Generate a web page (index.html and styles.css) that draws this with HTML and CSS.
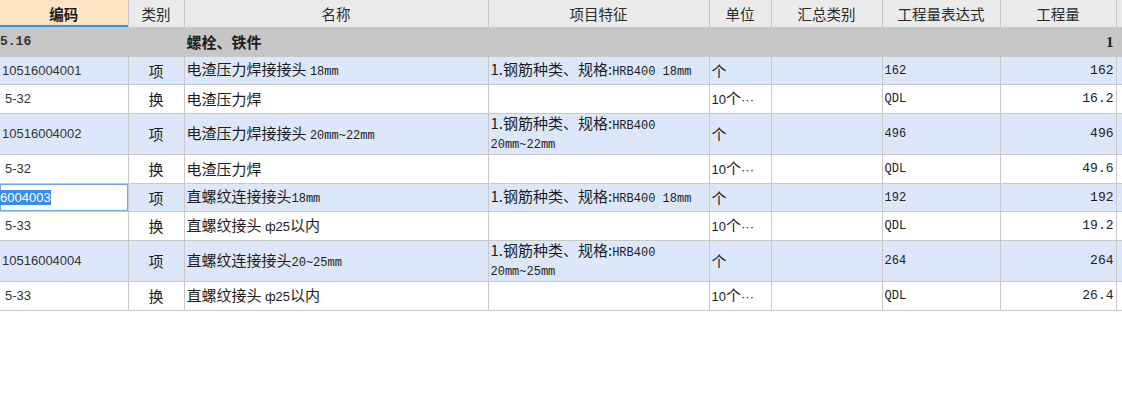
FILE: index.html
```html
<!DOCTYPE html>
<html lang="zh-CN">
<head>
<meta charset="utf-8">
<title>清单</title>
<link rel="stylesheet" href="styles.css">
</head>
<body>
<table class="grid">
  <colgroup>
    <col class="c-code"><col class="c-type"><col class="c-name"><col class="c-feat"><col class="c-unit"><col class="c-sum"><col class="c-expr"><col class="c-qty"><col class="c-fill">
  </colgroup>
  <thead>
    <tr class="hdr">
      <th class="h-active">编码</th>
      <th>类别</th>
      <th>名称</th>
      <th>项目特征</th>
      <th>单位</th>
      <th>汇总类别</th>
      <th>工程量表达式</th>
      <th>工程量</th>
      <th class="fill"></th>
    </tr>
  </thead>
  <tbody>
    <tr class="group">
      <td class="code gcode">5.16</td>
      <td></td>
      <td class="name bold">螺栓、铁件</td>
      <td></td><td></td><td></td><td></td>
      <td class="qty gqty">1</td>
      <td class="fill"></td>
    </tr>
    <tr class="item">
      <td class="code">10516004001</td>
      <td class="type">项</td>
      <td class="name">电渣压力焊接接头 <span class="lat">18mm</span></td>
      <td class="feat">1.钢筋种类、规格:<span class="lat">HRB400 18mm</span></td>
      <td class="unit">个</td>
      <td></td>
      <td class="expr">162</td>
      <td class="qty">162</td>
      <td class="fill"></td>
    </tr>
    <tr class="sub">
      <td class="code ind">5-32</td>
      <td class="type">换</td>
      <td class="name">电渣压力焊</td>
      <td></td>
      <td class="unit"><span class="sans">10</span>个<span class="sans">···</span></td>
      <td></td>
      <td class="expr">QDL</td>
      <td class="qty">16.2</td>
      <td class="fill"></td>
    </tr>
    <tr class="item tall">
      <td class="code">10516004002</td>
      <td class="type">项</td>
      <td class="name">电渣压力焊接接头 <span class="lat">20mm~22mm</span></td>
      <td class="feat">1.钢筋种类、规格:<span class="lat">HRB400</span><br><span class="lat">20mm~22mm</span></td>
      <td class="unit">个</td>
      <td></td>
      <td class="expr">496</td>
      <td class="qty">496</td>
      <td class="fill"></td>
    </tr>
    <tr class="sub">
      <td class="code ind">5-32</td>
      <td class="type">换</td>
      <td class="name">电渣压力焊</td>
      <td></td>
      <td class="unit"><span class="sans">10</span>个<span class="sans">···</span></td>
      <td></td>
      <td class="expr">QDL</td>
      <td class="qty">49.6</td>
      <td class="fill"></td>
    </tr>
    <tr class="item">
      <td class="code editing"><span class="sel">6004003</span></td>
      <td class="type">项</td>
      <td class="name">直螺纹连接接头<span class="lat">18mm</span></td>
      <td class="feat">1.钢筋种类、规格:<span class="lat">HRB400 18mm</span></td>
      <td class="unit">个</td>
      <td></td>
      <td class="expr">192</td>
      <td class="qty">192</td>
      <td class="fill"></td>
    </tr>
    <tr class="sub">
      <td class="code ind">5-33</td>
      <td class="type">换</td>
      <td class="name">直螺纹接头 <span class="sans">ф25</span>以内</td>
      <td></td>
      <td class="unit"><span class="sans">10</span>个<span class="sans">···</span></td>
      <td></td>
      <td class="expr">QDL</td>
      <td class="qty">19.2</td>
      <td class="fill"></td>
    </tr>
    <tr class="item tall">
      <td class="code">10516004004</td>
      <td class="type">项</td>
      <td class="name">直螺纹连接接头<span class="lat">20~25mm</span></td>
      <td class="feat">1.钢筋种类、规格:<span class="lat">HRB400</span><br><span class="lat">20mm~25mm</span></td>
      <td class="unit">个</td>
      <td></td>
      <td class="expr">264</td>
      <td class="qty">264</td>
      <td class="fill"></td>
    </tr>
    <tr class="sub">
      <td class="code ind">5-33</td>
      <td class="type">换</td>
      <td class="name">直螺纹接头 <span class="sans">ф25</span>以内</td>
      <td></td>
      <td class="unit"><span class="sans">10</span>个<span class="sans">···</span></td>
      <td></td>
      <td class="expr">QDL</td>
      <td class="qty">26.4</td>
      <td class="fill"></td>
    </tr>
  </tbody>
</table>
</body>
</html>
```

FILE: styles.css
```css
html, body {
  margin: 0;
  padding: 0;
  background: #ffffff;
}

body {
  width: 1122px;
  height: 402px;
  overflow: hidden;
  font-family: "Noto Sans CJK SC", "Liberation Sans", sans-serif;
  font-size: 15px;
  color: #1c1c1c;
}

.grid {
  border-collapse: collapse;
  table-layout: fixed;
  width: 1122px;
}

.c-code { width: 128px; }
.c-type { width: 56px; }
.c-name { width: 304px; }
.c-feat { width: 221px; }
.c-unit { width: 62px; }
.c-sum { width: 111px; }
.c-expr { width: 118px; }
.c-qty { width: 116px; }
.c-fill { width: 6px; }

.grid th,
.grid td {
  border: 1px solid #c8c8c8;
  padding: 0 2px;
  white-space: nowrap;
  overflow: hidden;
  vertical-align: middle;
  line-height: 16px;
}

.grid th.fill,
.grid td.fill {
  border-right: none;
  padding: 0;
}

.grid tr > :first-child {
  border-left: none;
}

.hdr th {
  height: 27px;
  border-top: none;
  background: #ebebeb;
  font-weight: normal;
  font-size: 14.5px;
  color: #2a2a2a;
  text-align: center;
}

.hdr th.h-active {
  background: #fde4c3;
  font-weight: bold;
  color: #1a1a1a;
  box-shadow: inset 0 -2px 0 #3f8fe6;
}

.group td {
  height: 28px;
  background: #c6c6c6;
  font-weight: bold;
}

.group .gcode {
  font-family: "Liberation Mono", monospace;
  font-size: 13px;
  padding-left: 0;
}

.group .gqty {
  font-family: "Liberation Serif", serif;
  font-size: 15px;
}

.item td {
  height: 27px;
  background: #dce8fa;
}

.sub td {
  height: 28px;
  background: #ffffff;
}

.tall td {
  height: 40px;
}

.code {
  font-family: "Liberation Sans", sans-serif;
  font-size: 13px;
  color: #333333;
}

.code.ind {
  padding-left: 5px;
}

.type {
  text-align: center;
}

.name {
  padding-left: 3px;
}

.bold {
  font-weight: bold;
}

.feat {
  padding-left: 3px;
}

.lat {
  font-family: "Liberation Mono", monospace;
  font-size: 12px;
}

.sans {
  font-family: "Liberation Sans", sans-serif;
  font-size: 13px;
}

.expr {
  font-family: "Liberation Mono", monospace;
  font-size: 12px;
}

.qty {
  text-align: right;
  font-family: "Liberation Mono", monospace;
  font-size: 13px;
  padding-right: 3px;
}

.item td.code.editing {
  background: #ffffff;
  box-shadow: inset 0 0 0 1px #6fa6ef;
  padding-left: 0;
}

.sel {
  background: #3a8cea;
  color: #ffffff;
}
```
